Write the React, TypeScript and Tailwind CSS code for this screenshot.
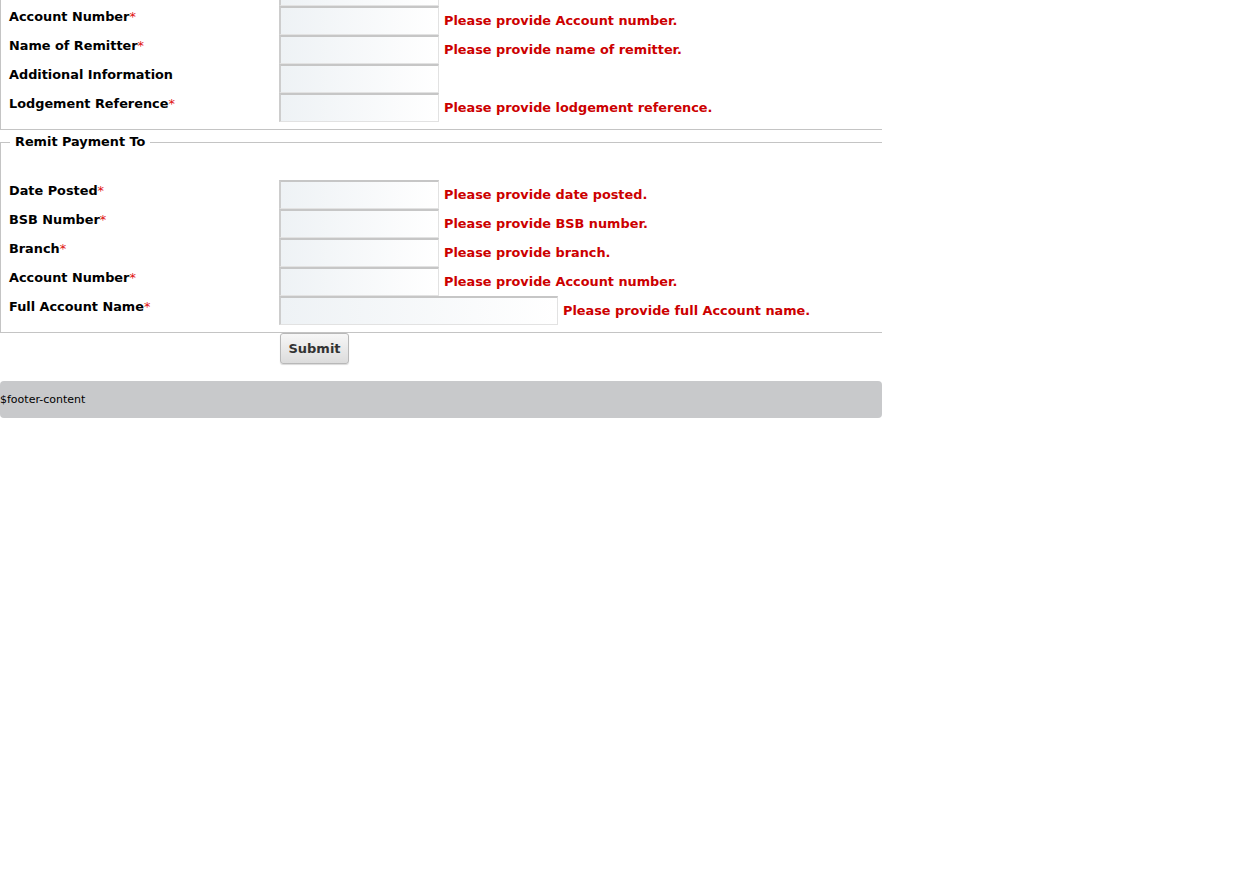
import React from 'react'

type Row = { label: string; required?: boolean; error?: string; wide?: boolean }

const LODGEMENT_ROWS: Row[] = [
  { label: '' },
  { label: 'Account Number', required: true, error: 'Please provide Account number.' },
  { label: 'Name of Remitter', required: true, error: 'Please provide name of remitter.' },
  { label: 'Additional Information' },
  { label: 'Lodgement Reference', required: true, error: 'Please provide lodgement reference.' },
]

const REMIT_ROWS: Row[] = [
  { label: 'Date Posted', required: true, error: 'Please provide date posted.' },
  { label: 'BSB Number', required: true, error: 'Please provide BSB number.' },
  { label: 'Branch', required: true, error: 'Please provide branch.' },
  { label: 'Account Number', required: true, error: 'Please provide Account number.' },
  { label: 'Full Account Name', required: true, error: 'Please provide full Account name.', wide: true },
]

function FormRow({ row }: { row: Row }) {
  return (
    <div className="flex h-[29px]">
      <label className="w-[278px] shrink-0 pl-[8px] pt-[3px] text-[12.85px] font-bold leading-[16px] text-black">
        {row.label}
        {row.required && <span className="font-normal text-[#e01010]">*</span>}
      </label>
      <input
        type="text"
        className={
          'h-[29px] shrink-0 border-t-2 border-l-2 border-r border-b border-t-[#c6c6c6] border-l-[#cdcdcd] border-r-[#e2e2e2] border-b-[#e2e2e2] bg-linear-to-r from-[#eef2f5] to-white outline-none ' +
          (row.wide ? 'w-[279px]' : 'w-[160px]')
        }
      />
      {row.error && (
        <span className="ml-[5px] self-center pt-[1px] text-[12.85px] font-bold leading-[16px] text-[#cc0000]">
          {row.error}
        </span>
      )}
    </div>
  )
}

export default function App() {
  return (
    <div className="w-[882px] overflow-hidden bg-white font-['DejaVu_Sans',Verdana,sans-serif]">
      {/* page is scrolled: first row only shows the bottom of its input */}
      <fieldset className="-mt-[24px] border-l border-t border-b border-[#c4c4c4] pb-[7px]">
        {LODGEMENT_ROWS.map((r, i) => (
          <FormRow key={i} row={r} />
        ))}
      </fieldset>

      <fieldset className="mt-[4px] border-l border-t border-b border-[#c4c4c4] pb-[7px]">
        <legend className="ml-[9px] px-[5px] text-[12.85px] font-bold leading-[16px] text-black">
          Remit Payment To
        </legend>
        <div className="h-[30px]" />
        {REMIT_ROWS.map((r, i) => (
          <FormRow key={i} row={r} />
        ))}
      </fieldset>

      <div className="pl-[280px]">
        <button className="h-[31px] w-[69px] rounded-[3px] border border-[#b8b8b8] bg-linear-to-b from-[#f7f7f7] to-[#dcdcdc] text-[13px] font-bold text-[#333] shadow-[0_1px_1px_rgba(0,0,0,0.15)]">
          Submit
        </button>
      </div>

      <div className="mt-[17px] flex h-[37px] items-center rounded-[4px] bg-[#c8c9cb] pt-[1px] text-[11px] text-black">
        $footer-content
      </div>
    </div>
  )
}
